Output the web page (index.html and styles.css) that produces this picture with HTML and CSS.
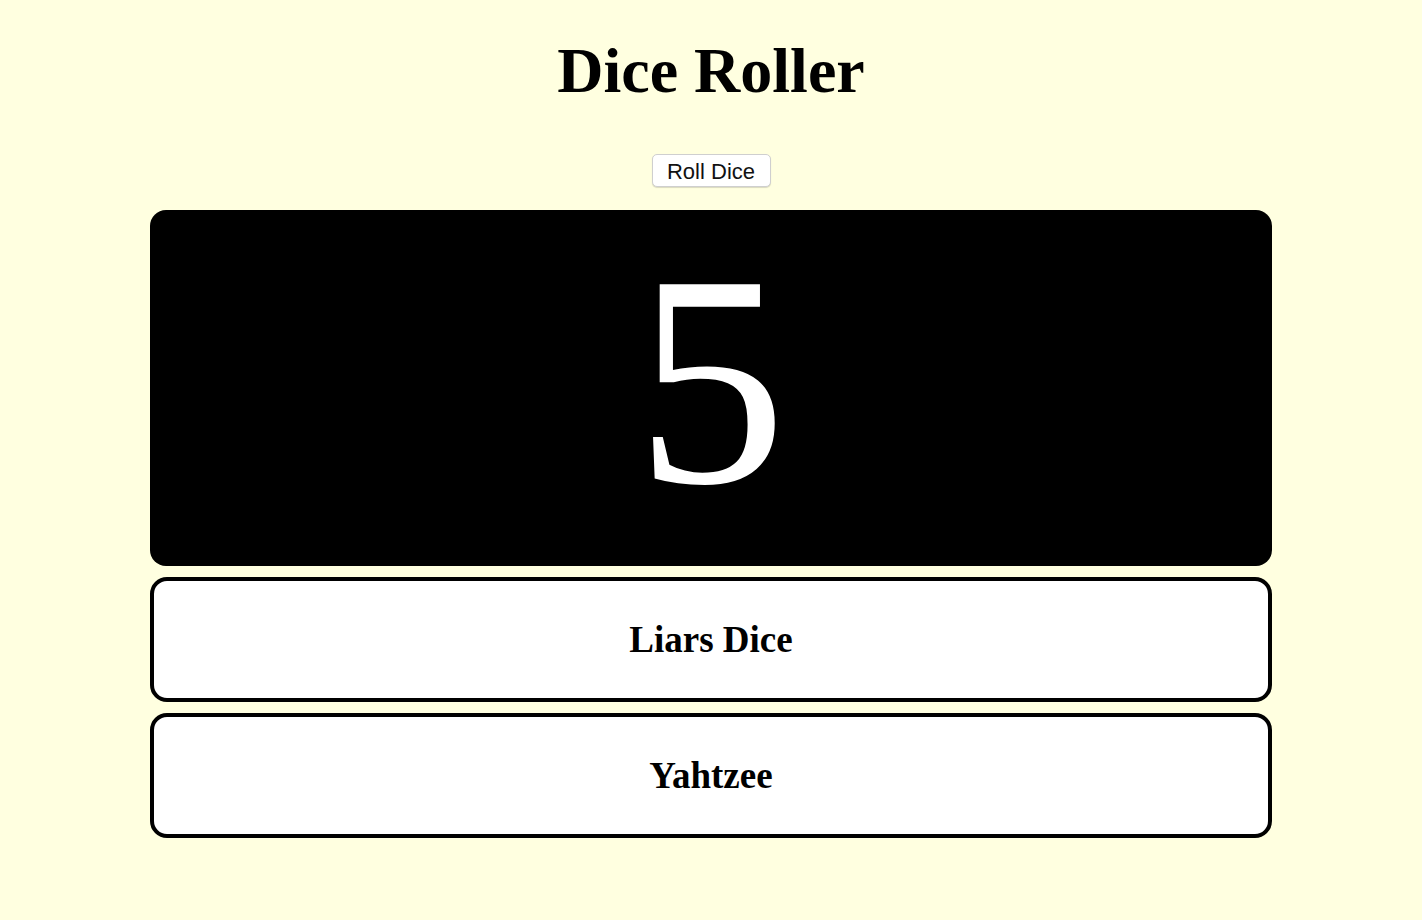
FILE: index.html
```html
<!DOCTYPE html>
<html lang="en">
<head>
<meta charset="utf-8">
<title>Dice Roller</title>
<link rel="stylesheet" href="styles.css">
</head>
<body>
  <main class="app">
    <h1 class="title">Dice Roller</h1>
    <button class="roll-btn" type="button">Roll Dice</button>
    <section class="list">
      <div class="die-card">5</div>
      <div class="game-card">Liars Dice</div>
      <div class="game-card">Yahtzee</div>
    </section>
  </main>
</body>
</html>
```
FILE: styles.css
```css
html, body {
  margin: 0;
  padding: 0;
  background: #ffffe0;
}

.app {
  display: flex;
  flex-direction: column;
  align-items: center;
  font-family: "Liberation Serif", "Times New Roman", serif;
  color: #000;
}

.title {
  margin: 34px 0 0;
  font-size: 64px;
  font-weight: bold;
  line-height: 74px;
}

.roll-btn {
  margin-top: 46px;
  width: 119px;
  height: 33px;
  padding: 3px 0 0;
  background: #fff;
  border: 1px solid #cfcfcf;
  border-radius: 5px;
  box-shadow: 0 1px 1px rgba(0, 0, 0, 0.15);
  font-family: "Liberation Sans", Arial, sans-serif;
  font-size: 22px;
  color: #111;
}

.list {
  margin-top: 23px;
  width: 1122px;
  display: flex;
  flex-direction: column;
  gap: 11px;
}

.die-card {
  height: 356px;
  box-sizing: border-box;
  padding-bottom: 14px;
  background: #000;
  color: #fff;
  border-radius: 16px;
  display: flex;
  align-items: center;
  justify-content: center;
  font-size: 302px;
  line-height: 1.15;
}

.game-card {
  height: 125px;
  box-sizing: border-box;
  background: #fff;
  border: 4px solid #000;
  border-radius: 17px;
  display: flex;
  align-items: center;
  justify-content: center;
  font-size: 37px;
  font-weight: bold;
}
```
